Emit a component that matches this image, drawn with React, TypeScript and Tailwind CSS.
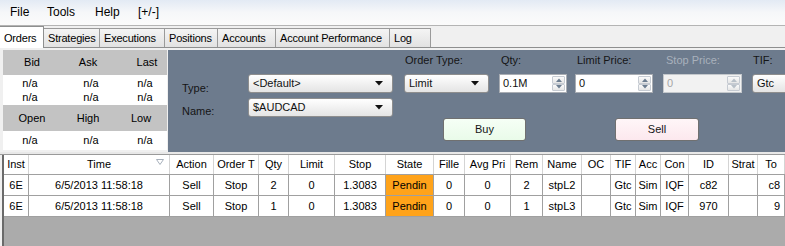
import React from "react";

const cols: { h: string; w: number; align?: "c" | "r" | "l" }[] = [
  { h: "Inst", w: 25 },
  { h: "Time", w: 141 },
  { h: "Action", w: 44 },
  { h: "Order T", w: 45 },
  { h: "Qty", w: 30 },
  { h: "Limit", w: 46 },
  { h: "Stop", w: 51 },
  { h: "State", w: 48 },
  { h: "Fille", w: 31 },
  { h: "Avg Pri", w: 46 },
  { h: "Rem", w: 32 },
  { h: "Name", w: 39 },
  { h: "OC", w: 29 },
  { h: "TIF", w: 25 },
  { h: "Acc", w: 25 },
  { h: "Con", w: 28 },
  { h: "ID", w: 40 },
  { h: "Strat", w: 29 },
  { h: "To", w: 27, align: "r" },
];

const rows = [
  ["6E", "6/5/2013 11:58:18", "Sell", "Stop", "2", "0", "1.3083", "Pendin", "0", "0", "2", "stpL2", "", "Gtc", "Sim", "IQF", "c82", "", "c8"],
  ["6E", "6/5/2013 11:58:18", "Sell", "Stop", "1", "0", "1.3083", "Pendin", "0", "0", "1", "stpL3", "", "Gtc", "Sim", "IQF", "970", "", "9"],
];

const tabs = [
  { t: "Orders", w: 44, sel: true },
  { t: "Strategies", w: 56 },
  { t: "Executions", w: 65 },
  { t: "Positions", w: 53 },
  { t: "Accounts", w: 58 },
  { t: "Account Performance", w: 114 },
  { t: "Log", w: 41 },
];

function Arrow() {
  return (
    <svg width="8" height="5" viewBox="0 0 8 5" className="shrink-0">
      <path d="M0 0 H8 L4 4.5 Z" fill="#111" />
    </svg>
  );
}

function Combo({ text, w }: { text: string; w: number }) {
  return (
    <div
      className="h-[19px] flex items-center justify-between pl-[4px] pr-[9px] rounded-[3px] border border-[#8e8e8e] bg-linear-to-b from-[#ffffff] to-[#e4e4e4] text-[#111] overflow-hidden whitespace-nowrap"
      style={{ width: w }}
    >
      <span>{text}</span>
      <Arrow />
    </div>
  );
}

function SpinBtn({ up, disabled }: { up: boolean; disabled?: boolean }) {
  return (
    <div className="flex-1 flex items-center justify-center border border-[#c6cbd2] bg-linear-to-b from-[#fbfbfb] to-[#e6e6e6] rounded-[1px]">
      <svg width="6" height="4" viewBox="0 0 6 4">
        <path d={up ? "M0 4 L3 0.5 L6 4 Z" : "M0 0 L3 3.5 L6 0 Z"} fill={disabled ? "#b8c0c8" : "#6c7d90"} />
      </svg>
    </div>
  );
}

function Spinner({ text, w, disabled }: { text: string; w: number; disabled?: boolean }) {
  return (
    <div
      className={`h-[19px] flex border ${disabled ? "border-[#c4c8cc] bg-[#f2f2f2] text-[#a6a6a6]" : "border-[#a9adb3] bg-white text-[#111]"}`}
      style={{ width: w }}
    >
      <div className="flex-1 flex items-center pl-[3px]">{text}</div>
      <div className="w-[15px] flex flex-col p-[1px] gap-0">
        <SpinBtn up disabled={disabled} />
        <SpinBtn up={false} disabled={disabled} />
      </div>
    </div>
  );
}

export default function App() {
  return (
    <div className="w-[785px] h-[246px] overflow-hidden bg-[#f0f0f0] text-[11px] text-black font-['Liberation_Sans',Arial,sans-serif] leading-[13px]">
      {/* Menu bar */}
      <div className="h-[26px] flex items-center text-[12px] bg-linear-to-b from-[#e3eaf4] via-[#f6f7f9] to-[#fbfbfb] border-b border-[#b4b4b4]">
        <span className="ml-[10px] w-[37px]">File</span>
        <span className="w-[48px]">Tools</span>
        <span className="w-[43px]">Help</span>
        <span>[+/-]</span>
      </div>

      {/* Tabs */}
      <div className="h-[22px] flex items-end border-b border-[#8e8f8f] bg-[#f0f0f0] tracking-[-0.2px]">
        {tabs.map((t) =>
          t.sel ? (
            <div
              key={t.t}
              className="h-[22px] -mb-px bg-white border-r border-t border-[#8e8f8f] pl-[4px] pt-[5px] z-10"
              style={{ width: t.w }}
            >
              {t.t}
            </div>
          ) : (
            <div
              key={t.t}
              className="h-[19px] border-r border-t border-[#9a9a9a] bg-linear-to-b from-[#f4f4f4] to-[#e2e2e2] pl-[4px] pt-[3px] whitespace-nowrap overflow-hidden"
              style={{ width: t.w }}
            >
              {t.t}
            </div>
          )
        )}
      </div>

      {/* Top panel */}
      <div className="h-[104px] flex pt-[2px] pl-[3px] bg-[#f0f0f0]">
        <div className="w-[164px] h-[100px] bg-white flex flex-col text-center">
          <div className="h-[25px] bg-[#c3c3c3] grid grid-cols-[58px_54px_52px] items-center">
            <span>Bid</span>
            <span>Ask</span>
            <span className="pl-[12px]">Last</span>
          </div>
          <div className="h-[30px] grid grid-cols-[58px_54px_52px] content-center leading-[14px]">
            <span className="pr-[4px]">n/a</span>
            <span className="pl-[6px]">n/a</span>
            <span className="pl-[8px]">n/a</span>
            <span className="pr-[4px]">n/a</span>
            <span className="pl-[6px]">n/a</span>
            <span className="pl-[8px]">n/a</span>
          </div>
          <div className="h-[26px] bg-[#c3c3c3] grid grid-cols-[58px_54px_52px] items-center">
            <span>Open</span>
            <span>High</span>
            <span className="pl-[0px]">Low</span>
          </div>
          <div className="h-[19px] grid grid-cols-[58px_54px_52px] items-center">
            <span className="pr-[4px]">n/a</span>
            <span className="pl-[6px]">n/a</span>
            <span className="pl-[8px]">n/a</span>
          </div>
        </div>

        <div className="flex-1 ml-[1px] h-[102px] bg-[#6d7b8d] text-[#151515]">
          <div className="flex h-[67px]">
            <div className="w-[80px] pl-[14px]">
              <div className="h-[24px]" />
              <div className="h-[24px] pt-[8px]">Type:</div>
              <div className="h-[19px] pt-[7px]">Name:</div>
            </div>
            <div className="w-[145px]">
              <div className="h-[24px]" />
              <Combo text="<Default>" w={145} />
              <div className="h-[5px]" />
              <Combo text="$AUDCAD" w={145} />
            </div>
            <div className="ml-[11px] w-[85px]">
              <div className="h-[24px] pt-[4px] pl-[1px] whitespace-nowrap">Order Type:</div>
              <Combo text="Limit" w={85} />
            </div>
            <div className="ml-[10px] w-[68px]">
              <div className="h-[24px] pt-[4px] pl-[2px]">Qty:</div>
              <Spinner text="0.1M" w={68} />
            </div>
            <div className="ml-[8px] w-[78px]">
              <div className="h-[24px] pt-[4px] pl-[2px] whitespace-nowrap">Limit Price:</div>
              <Spinner text="0" w={78} />
            </div>
            <div className="ml-[10px] w-[79px]">
              <div className="h-[24px] pt-[4px] pl-[3px] whitespace-nowrap text-[#a9b1bc]">Stop Price:</div>
              <Spinner text="0" w={79} disabled />
            </div>
            <div className="ml-[10px] w-[60px]">
              <div className="h-[24px] pt-[4px] pl-[1px]">TIF:</div>
              <Combo text="Gtc" w={60} />
            </div>
          </div>
          <div className="flex pl-[275px] mt-[1px]">
            <div className="w-[83px] h-[23px] flex items-center justify-center rounded-[3px] border border-[#707070] bg-linear-to-b from-[#f6fff6] to-[#e9fbe9]">
              Buy
            </div>
            <div className="ml-[89px] w-[84px] h-[23px] flex items-center justify-center rounded-[3px] border border-[#707070] bg-linear-to-b from-[#fff6f8] to-[#fce8ee]">
              Sell
            </div>
          </div>
        </div>
      </div>

      {/* Separator */}
      <div className="h-[3px] bg-[#e8e8e8] border-b border-[#9a9a9a]" />

      {/* Grid */}
      <div className="ml-[2px] border-l-[2px] border-[#6a6a6a] bg-[#ababab] h-[91px]">
        <div className="flex h-[20px] bg-white border-b border-[#a0a0a0]">
          {cols.map((c, i) => (
            <div
              key={c.h}
              className="relative flex items-center justify-center border-r border-[#d4d4d4] overflow-hidden whitespace-nowrap shrink-0"
              style={{ width: c.w }}
            >
              {c.h}
              {i === 1 && (
                <svg width="8" height="6" viewBox="0 0 8 6" className="absolute right-[5px] top-[4px]">
                  <path d="M0.5 0.5 H7.5 L4 5.5 Z" fill="none" stroke="#a7b0bb" strokeWidth="1" />
                </svg>
              )}
            </div>
          ))}
        </div>
        {rows.map((r, ri) => (
          <div key={ri} className="flex h-[21px] bg-white border-b border-[#a0a0a0]">
            {r.map((v, i) => (
              <div
                key={i}
                className={`flex items-center border-r border-[#a0a0a0] overflow-hidden whitespace-nowrap shrink-0 ${
                  cols[i].align === "r" ? "justify-end pr-[4px]" : "justify-center"
                } ${i === 7 ? "bg-[#ffa31a]" : ""}`}
                style={{ width: cols[i].w }}
              >
                {v}
              </div>
            ))}
          </div>
        ))}
      </div>
    </div>
  );
}
